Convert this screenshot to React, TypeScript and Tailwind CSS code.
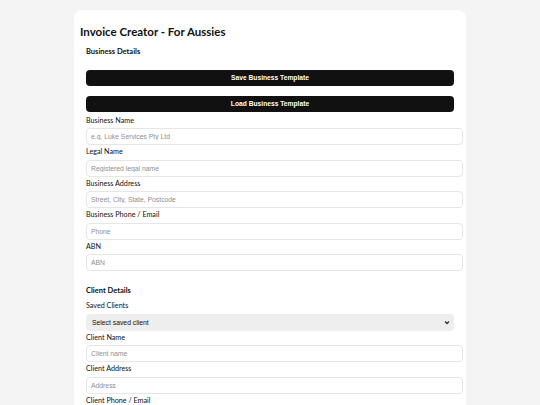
const businessFields = [
  { label: "Business Name", placeholder: "e.g. Luke Services Pty Ltd" },
  { label: "Legal Name", placeholder: "Registered legal name" },
  { label: "Business Address", placeholder: "Street, City, State, Postcode" },
  { label: "Business Phone / Email", placeholder: "Phone" },
  { label: "ABN", placeholder: "ABN" },
];

const clientFields = [
  { label: "Client Name", placeholder: "Client name" },
  { label: "Client Address", placeholder: "Address" },
  { label: "Client Phone / Email", placeholder: "Phone / Email" },
];

function Field({ label, placeholder }: { label: string; placeholder: string }) {
  return (
    <div className="flex flex-col">
      <label className="h-[14.5px] leading-[14.5px] text-[7.2px] text-[#111] [font-family:Lato,sans-serif]">
        {label}
      </label>
      <input
        placeholder={placeholder}
        className="h-[17px] w-[377px] rounded-[4px] border border-[#e6e6e6] bg-white px-[4px] text-[6.8px] outline-none placeholder:text-[#8f8f8f] [font-family:'Liberation_Sans',Arial,sans-serif]"
      />
    </div>
  );
}

export default function App() {
  return (
    <div className="min-h-[405px] bg-[#f4f4f4] pt-[10px]">
      <div className="mx-auto w-[392px] rounded-t-[8px] bg-white px-[6px] pt-[14px] pb-[20px]">
        <h1 className="h-[16px] leading-[16px] text-[11.5px] font-bold text-[#111] [font-family:Lato,sans-serif]">
          Invoice Creator - For Aussies
        </h1>

        <div className="pl-[6px]">
          <h2 className="mt-[5px] h-[14px] leading-[14px] text-[7.5px] font-bold text-[#111] [font-family:Lato,sans-serif]">
            Business Details
          </h2>

          <div className="mt-[11px] flex flex-col gap-[10px]">
            <button className="h-[16px] w-[368px] rounded-[4px] bg-[#111] text-[6.7px] font-bold text-white [font-family:'Liberation_Sans',Arial,sans-serif]">
              Save Business Template
            </button>
            <button className="h-[16px] w-[368px] rounded-[4px] bg-[#111] text-[6.7px] font-bold text-white [font-family:'Liberation_Sans',Arial,sans-serif]">
              Load Business Template
            </button>
          </div>

          <div className="mt-[1.5px] flex flex-col">
            {businessFields.map((f) => (
              <Field key={f.label} {...f} />
            ))}
          </div>

          <h2 className="mt-[11px] h-[17px] leading-[17px] text-[7.5px] font-bold text-[#111] [font-family:Lato,sans-serif]">
            Client Details
          </h2>

          <label className="block h-[14.5px] leading-[14.5px] text-[7.2px] text-[#111] [font-family:Lato,sans-serif]">
            Saved Clients
          </label>
          <div className="relative h-[17px] w-[368px] rounded-[4px] bg-[#eeeeee]">
            <span className="absolute left-[6px] top-0 leading-[17px] text-[6.8px] text-[#111] [font-family:'Liberation_Sans',Arial,sans-serif]">
              Select saved client
            </span>
            <svg className="absolute right-[4px] top-[6px]" width="6" height="5" viewBox="0 0 6 5">
              <path d="M1 1.5 L3 3.5 L5 1.5" fill="none" stroke="#333" strokeWidth="1.3" />
            </svg>
          </div>

          <div className="flex flex-col">
            {clientFields.map((f) => (
              <Field key={f.label} {...f} />
            ))}
          </div>
        </div>
      </div>
    </div>
  );
}
